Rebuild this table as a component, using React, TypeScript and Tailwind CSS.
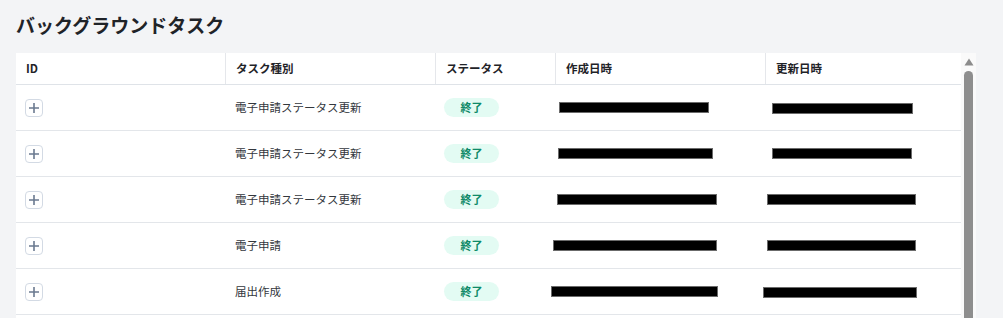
type Row = {
  id: number;
  kind: string;
  // redacted date bars: [offsetFromCellLeft, width, offsetY]
  created: [number, number, number];
  updated: [number, number, number];
};

const rows: Row[] = [
  { id: 1, kind: "電子申請ステータス更新", created: [3, 150, 0], updated: [6, 141, 1] },
  { id: 2, kind: "電子申請ステータス更新", created: [2, 155, 0], updated: [6, 140, 0] },
  { id: 3, kind: "電子申請ステータス更新", created: [1, 160, 0], updated: [1, 149, 0] },
  { id: 4, kind: "電子申請", created: [-3, 164, 0], updated: [1, 149, 0] },
  { id: 5, kind: "届出作成", created: [-5, 167, 0], updated: [-3, 154, 2] },
];

const columns = [
  { label: "ID", w: "w-[210px]" },
  { label: "タスク種別", w: "w-[210px]" },
  { label: "ステータス", w: "w-[120px]" },
  { label: "作成日時", w: "w-[210px]" },
  { label: "更新日時", w: "flex-1" },
];

function Redacted({ spec }: { spec: [number, number, number] }) {
  const [x, w, y] = spec;
  return (
    <div
      className="h-[11px] bg-black border border-[#6b6b6b]"
      style={{ marginLeft: x, width: w, marginTop: y }}
    />
  );
}

function PlusIcon() {
  return (
    <svg width="10" height="10" viewBox="0 0 10 10" fill="none" stroke="currentColor" strokeWidth={1.6}>
      <path d="M5 0 V10 M0 5 H10" />
    </svg>
  );
}

export default function App() {
  return (
    <div
      className="w-[1003px] h-[318px] overflow-hidden bg-[#f3f4f6] text-[#2b2f36]"
      style={{ fontFamily: '"Noto Sans CJK JP", "Noto Sans", sans-serif' }}
    >
      <h1 className="pl-4 pt-[8px] h-[53px] text-[19px] font-bold leading-[34px] text-[#1f2328]">
        バックグラウンドタスク
      </h1>

      <div className="ml-4 w-[960px] flex bg-white">
        <div className="w-[945px]">
          {/* Header */}
          <div className="flex h-[32px] border-b border-[#dfe3e8]">
            {columns.map((c, i) => (
              <div
                key={c.label}
                className={`${c.w} flex items-center px-[10px] text-[11.5px] font-bold text-[#1f2328] ${
                  i < columns.length - 1 ? "border-r border-[#e5e7eb]" : ""
                }`}
              >
                {c.label}
              </div>
            ))}
          </div>

          {/* Rows */}
          {rows.map((r) => (
            <div key={r.id} className="flex h-[46px] border-b border-[#e3e6ea]">
              <div className="w-[210px] flex items-center pl-[9px]">
                <button className="w-[18px] h-[18px] flex items-center justify-center rounded-[4px] border border-[#d3dae4] bg-white text-[#6b7a90]">
                  <PlusIcon />
                </button>
              </div>
              <div className="w-[210px] flex items-center pl-[9px] text-[11.5px] text-[#33373d]">
                {r.kind}
              </div>
              <div className="w-[120px] flex items-center pl-[8px]">
                <span className="w-[55px] h-[19px] flex items-center justify-center rounded-full bg-[#e3fbf3] text-[11px] font-bold text-[#0f8a68]">
                  終了
                </span>
              </div>
              <div className="w-[210px] flex items-center">
                <Redacted spec={r.created} />
              </div>
              <div className="flex-1 flex items-center">
                <Redacted spec={r.updated} />
              </div>
            </div>
          ))}
        </div>

        {/* Scrollbar */}
        <div className="w-[15px] bg-[#fafafa] flex flex-col items-center">
          <svg width="10" height="8" viewBox="0 0 10 8" className="mt-[5px]">
            <path d="M5 0.5 L9.5 7.5 L0.5 7.5 Z" fill="#8c8c8c" />
          </svg>
          <div className="mt-[5px] w-[9px] flex-1 min-h-[260px] rounded-t-full bg-[#8e8e8e]" />
        </div>
      </div>
    </div>
  );
}
